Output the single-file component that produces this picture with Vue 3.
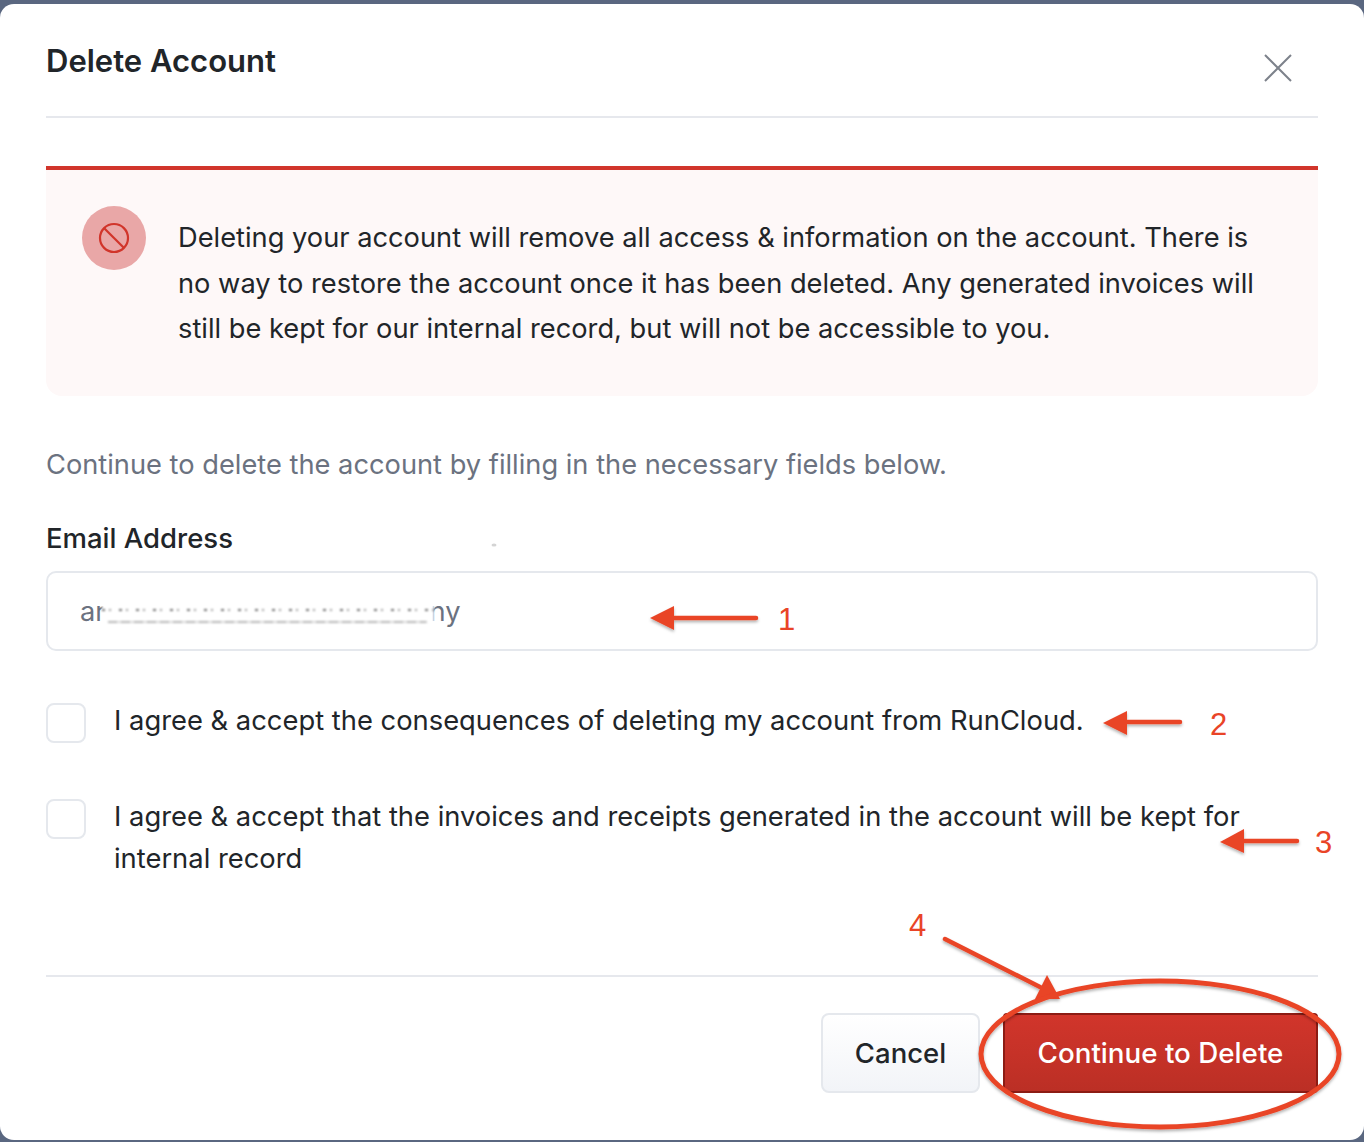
<script setup>
const arrows = [
  { line: 'M756 618 H672', head: '650,618 674,606 674,630' },
  { line: 'M1180 722 H1126', head: '1103,723 1127,711 1127,735' },
  { line: 'M1297 841 H1243', head: '1220,842 1244,829 1244,853' },
  { line: 'M945 939 L1040 987', head: '1060,999 1035,999 1047,975' },
]
const numbers = [
  { x: 778, y: 630, t: '1' },
  { x: 1210, y: 735, t: '2' },
  { x: 1315, y: 853, t: '3' },
  { x: 909, y: 936, t: '4' },
]
</script>

<template>
  <div class="page">
    <div class="modal">
      <header class="head">
        <h1>Delete Account</h1>
        <button class="close" aria-label="Close">
          <svg width="30" height="30" viewBox="0 0 30 30"><path d="M2 2 L28 28 M28 2 L2 28" stroke="#7d828b" stroke-width="2" fill="none" /></svg>
        </button>
      </header>

      <section class="alert">
        <span class="badge">
          <svg width="32" height="32" viewBox="0 0 32 32" fill="none" stroke="#d1352b" stroke-width="2.2"><circle cx="16" cy="16" r="14" /><path d="M6.2 6.2 L25.8 25.8" /></svg>
        </span>
        <p>Deleting your account will remove all access &amp; information on the account. There is no way to restore the account once it has been deleted. Any generated invoices will still be kept for our internal record, but will not be accessible to you.</p>
      </section>

      <p class="intro">Continue to delete the account by filling in the necessary fields below.</p>

      <label class="label">Email Address</label>
      <div class="input">
        <span>ar</span><span class="redacted"></span><span>ny</span>
      </div>

      <div class="check first">
        <span class="box"></span>
        <span class="copy">I agree &amp; accept the consequences of deleting my account from RunCloud.</span>
      </div>
      <div class="check second">
        <span class="box"></span>
        <span class="copy">I agree &amp; accept that the invoices and receipts generated in the account will be kept for internal record</span>
      </div>

      <footer class="foot">
        <button class="btn cancel">Cancel</button>
        <button class="btn danger">Continue to Delete</button>
      </footer>
    </div>

    <svg class="marks" width="1364" height="1142" viewBox="0 0 1364 1142">
      <defs>
        <filter id="sh" x="-20%" y="-20%" width="140%" height="140%">
          <feDropShadow dx="0" dy="2" stdDeviation="1.5" flood-color="#000" flood-opacity="0.3" />
        </filter>
      </defs>
      <ellipse cx="494" cy="545" rx="2.5" ry="1.5" fill="#d4d4d4" />
      <g filter="url(#sh)">
        <g v-for="(a, i) in arrows" :key="i">
          <path :d="a.line" stroke="#e94427" stroke-width="4.5" stroke-linecap="round" fill="none" />
          <polygon :points="a.head" fill="#e94427" />
        </g>
        <ellipse cx="1160" cy="1054" rx="179" ry="73" fill="none" stroke="#e94427" stroke-width="5" />
      </g>
      <text v-for="n in numbers" :key="n.t" :x="n.x" :y="n.y" class="num">{{ n.t }}</text>
    </svg>
  </div>
</template>

<style scoped>
.page {
  position: relative;
  width: 1364px;
  height: 1142px;
  background: #5a6780;
  padding-top: 4px;
  box-sizing: border-box;
  overflow: hidden;
  font-family: Inter, "Liberation Sans", sans-serif;
  color: #212529;
}
.modal {
  height: 1136px;
  box-sizing: border-box;
  background: #fff;
  border-radius: 14px;
  padding: 0 46px;
  display: flex;
  flex-direction: column;
}
.head {
  height: 114px;
  flex: none;
  box-sizing: border-box;
  border-bottom: 2px solid #e6e8ed;
  display: flex;
  justify-content: space-between;
  align-items: flex-start;
}
h1 {
  margin: 37px 0 0;
  font-size: 31px;
  line-height: 40px;
  font-weight: 600;
}
.close {
  margin: 49px 25px 0 0;
  padding: 0;
  border: 0;
  background: none;
  width: 30px;
  height: 30px;
}
.alert {
  margin-top: 48px;
  height: 230px;
  flex: none;
  box-sizing: border-box;
  border-top: 4px solid #d1352b;
  border-radius: 0 0 16px 16px;
  background: #fef8f8;
  padding: 36px 36px 0;
  display: flex;
  gap: 32px;
}
.badge {
  width: 64px;
  height: 64px;
  flex: none;
  border-radius: 50%;
  background: #e9a7a7;
  display: flex;
  align-items: center;
  justify-content: center;
}
.alert p {
  margin: 9px 0 0;
  font-size: 27.25px;
  line-height: 45.5px;
}
.intro {
  margin: 47px 0 0;
  font-size: 27.25px;
  line-height: 44px;
  color: #6b7280;
}
.label {
  margin: 31px 0 0;
  font-size: 27.5px;
  line-height: 40px;
  font-weight: 500;
}
.input {
  margin-top: 13px;
  height: 80px;
  flex: none;
  box-sizing: border-box;
  border: 2px solid #e5e8ed;
  border-radius: 10px;
  padding: 0 32px;
  display: flex;
  align-items: center;
  font-size: 27.25px;
  color: #6b7280;
  position: relative;
}
.redacted {
  width: 332px;
  height: 28px;
  margin: 0 -4px;
  position: relative;
  z-index: 1;
  background:
    repeating-linear-gradient(90deg, #6f6f6f 0 3px, transparent 3px 7px, #a0a0a0 7px 9px, transparent 9px 17px) 0 12px / 100% 2px no-repeat,
    repeating-linear-gradient(90deg, #b8b8b8 0 9px, #dcdcdc 9px 13px) 6px 24px / 96% 2px no-repeat,
    #fff;
  filter: blur(0.8px);
}
.check {
  display: flex;
  gap: 28px;
  font-size: 27.35px;
  line-height: 42px;
}
.copy { margin-top: -3px; }
.first { margin-top: 52px; }
.second { margin-top: 56px; }
.box {
  width: 40px;
  height: 40px;
  flex: none;
  box-sizing: border-box;
  border: 2px solid #e5e8ed;
  border-radius: 8px;
  background: #fff;
}
.foot {
  margin-top: 95px;
  border-top: 2px solid #e6e8ed;
  padding-top: 36px;
  display: flex;
  justify-content: flex-end;
  gap: 23px;
}
.btn {
  height: 80px;
  box-sizing: border-box;
  font-family: inherit;
  font-size: 27.5px;
  font-weight: 500;
  padding: 0;
}
.cancel {
  width: 159px;
  border: 2px solid #e5e8ed;
  border-radius: 8px;
  background: linear-gradient(#fff, #f2f4f8);
  color: #212529;
}
.danger {
  width: 315px;
  font-size: 27.75px;
  border: 2px solid #8c1c14;
  border-radius: 4px;
  background: linear-gradient(#d1352b, #bb2f25);
  color: #fff;
}
.marks {
  position: absolute;
  left: 0;
  top: 0;
  pointer-events: none;
}
.num {
  font-family: "Liberation Sans", sans-serif;
  font-size: 31px;
  fill: #e94427;
}
</style>
